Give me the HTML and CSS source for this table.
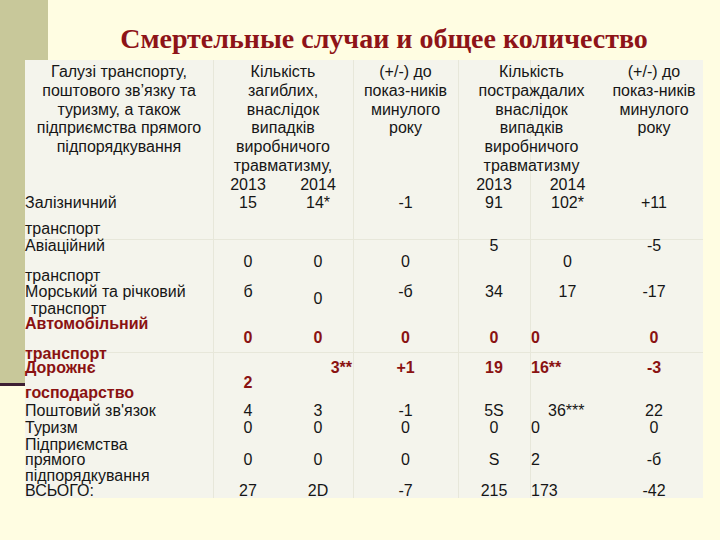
FILE: index.html
```html
<!DOCTYPE html>
<html lang="uk">
<head>
<meta charset="utf-8">
<title>Смертельные случаи и общее количество</title>
<link rel="stylesheet" href="styles.css">
</head>
<body>
<h1 class="title">Смертельные случаи и общее количество</h1>
<div class="sheet">
  <div class="vl c2"></div>
  <div class="vl c4"></div>
  <div class="vl c5"></div>
  <div class="vl c6"></div>
  <div class="hl r4"></div>
  <div class="hl r11 hl-mid"></div>

  <div class="head h1">Галузі транспорту,<br>поштового зв’язку та<br>туризму, а також<br>підприємства прямого<br>підпорядкування</div>
  <div class="head h2">Кількість<br>загиблих,<br>внаслідок<br>випадків<br>виробничого<br>травматизму,<div class="years y-a"><span>2013</span><span>2014</span></div></div>
  <div class="head h3">(+/-) до<br>показ-ників<br>минулого<br>року</div>
  <div class="head h4">Кількість<br>постраждалих<br>внаслідок<br>випадків<br>виробничого<br>травматизму<div class="years y-b"><span>2013</span><span>2014</span></div></div>
  <div class="head h5">(+/-) до<br>показ-ників<br>минулого<br>року</div>

  <div class="c1 r2">Залізничний</div>
  <div class="c2 r2">15</div>
  <div class="c3 r2">14*</div>
  <div class="c4 r2">-1</div>
  <div class="c5 r2">91</div>
  <div class="c6 r2">102*</div>
  <div class="c7 r2">+11</div>

  <div class="c1 r3">транспорт</div>

  <div class="c1 r4">Авіаційний</div>
  <div class="c5 r4">5</div>
  <div class="c7 r4">-5</div>

  <div class="c2 r5">0</div>
  <div class="c3 r5">0</div>
  <div class="c4 r5">0</div>
  <div class="c6 r5">0</div>

  <div class="c1 r6">транспорт</div>

  <div class="c1 r7">Морський та річковий</div>
  <div class="c2 r7">б</div>
  <div class="c3 r7 dn">0</div>
  <div class="c4 r7">-б</div>
  <div class="c5 r7">34</div>
  <div class="c6 r7">17</div>
  <div class="c7 r7">-17</div>

  <div class="c1 r8 ind">транспорт</div>

  <div class="c1 r9 em">Автомобільний</div>

  <div class="c2 r10 em">0</div>
  <div class="c3 r10 em">0</div>
  <div class="c4 r10 em">0</div>
  <div class="c5 r10 em">0</div>
  <div class="c6 r10 em left">0</div>
  <div class="c7 r10 em">0</div>

  <div class="c1 r11 em">транспорт</div>

  <div class="c1 r12 em">Дорожнє</div>
  <div class="c3 r12 em right">3**</div>
  <div class="c4 r12 em">+1</div>
  <div class="c5 r12 em">19</div>
  <div class="c6 r12 em left">16**</div>
  <div class="c7 r12 em">-3</div>

  <div class="c2 r13 em">2</div>

  <div class="c1 r14 em">господарство</div>

  <div class="c1 r15">Поштовий зв'язок</div>
  <div class="c2 r15">4</div>
  <div class="c3 r15">3</div>
  <div class="c4 r15">-1</div>
  <div class="c5 r15">5S</div>
  <div class="c6 r15 left far">36***</div>
  <div class="c7 r15">22</div>

  <div class="c1 r16">Туризм</div>
  <div class="c2 r16">0</div>
  <div class="c3 r16">0</div>
  <div class="c4 r16">0</div>
  <div class="c5 r16">0</div>
  <div class="c6 r16 left">0</div>
  <div class="c7 r16">0</div>

  <div class="c1 r17">Підприємства</div>

  <div class="c1 r18">прямого</div>
  <div class="c2 r18">0</div>
  <div class="c3 r18">0</div>
  <div class="c4 r18">0</div>
  <div class="c5 r18">S</div>
  <div class="c6 r18 left">2</div>
  <div class="c7 r18">-б</div>

  <div class="c1 r19">підпорядкування</div>

  <div class="c1 r20">ВСЬОГО:</div>
  <div class="c2 r20">27</div>
  <div class="c3 r20">2D</div>
  <div class="c4 r20">-7</div>
  <div class="c5 r20">215</div>
  <div class="c6 r20 left">173</div>
  <div class="c7 r20">-42</div>
</div>
</body>
</html>
```
FILE: styles.css
```css
* { box-sizing: border-box; }
html, body { margin: 0; padding: 0; }
body {
  width: 720px;
  height: 540px;
  overflow: hidden;
  font-family: "Liberation Sans", Arial, sans-serif;
  color: #161616;
  background:
    linear-gradient(#3d1f33, #3d1f33) 0 383px / 48px 3px no-repeat,
    linear-gradient(#c8c89a, #c8c89a) 0 0 / 48px 383px no-repeat,
    #fffde2;
}
.title {
  margin: 0;
  height: 60px;
  padding: 18px 0 0 48px;
  text-align: center;
  font-family: "Liberation Serif", "Times New Roman", serif;
  font-weight: bold;
  font-size: 28px;
  line-height: 42px;
  color: #8e1418;
  white-space: nowrap;
}
.sheet {
  margin-left: 25px;
  width: 678px;
  height: 438px;
  display: grid;
  grid-template-columns: 188px 70px 70px 105px 72px 75px 98px;
  grid-template-rows: 136px 26px 17px 16px 14px 16px 17px 15px 14px 16px 14px 15px 10px 18px 17px 17px 15px 16px 15px 14px;
  background: #f4f4ec;
  font-size: 16px;
  line-height: 14px;
}
.sheet > div {
  align-self: start;
  white-space: nowrap;
  text-align: center;
}
.sheet > .vl {
  grid-row: 1 / -1;
  align-self: stretch;
  border-left: 1px solid #e7e7da;
}
.sheet > .hl {
  grid-column: 1 / -1;
  border-top: 1px solid #e7e7da;
}
.sheet > .hl-mid { margin-top: 5px; }

.head {
  grid-row: 1;
  padding-top: 3px;
  line-height: 18.8px;
}
.h1 { grid-column: 1; }
.h2 { grid-column: 2 / 4; }
.h3 { grid-column: 4; }
.h4 { grid-column: 5 / 7; }
.h5 { grid-column: 7; }
.years { display: grid; }
.y-a { grid-template-columns: 70px 70px; }
.y-b { grid-template-columns: 72px 75px; }

.c1 { grid-column: 1; }
.sheet > .c1 { text-align: left; }
.c2 { grid-column: 2; }
.c3 { grid-column: 3; }
.c4 { grid-column: 4; }
.c5 { grid-column: 5; }
.c6 { grid-column: 6; }
.c7 { grid-column: 7; }

.r2 { grid-row: 2; }
.r3 { grid-row: 3; }
.r4 { grid-row: 4; }
.r5 { grid-row: 5; }
.r6 { grid-row: 6; }
.r7 { grid-row: 7; }
.r8 { grid-row: 8; }
.r9 { grid-row: 9; }
.r10 { grid-row: 10; }
.r11 { grid-row: 11; }
.r12 { grid-row: 12; }
.r13 { grid-row: 13; }
.r14 { grid-row: 14; }
.r15 { grid-row: 15; }
.r16 { grid-row: 16; }
.r17 { grid-row: 17; }
.r18 { grid-row: 18; }
.r19 { grid-row: 19; }
.r20 { grid-row: 20; }

.em { font-weight: bold; color: #8a1212; }
.ind { padding-left: 6px; }
.dn { padding-top: 7px; }
.sheet > .left { text-align: left; padding-left: 1px; }
.sheet > .far { padding-left: 18px; }
.sheet > .right { text-align: right; padding-right: 1px; }
```
